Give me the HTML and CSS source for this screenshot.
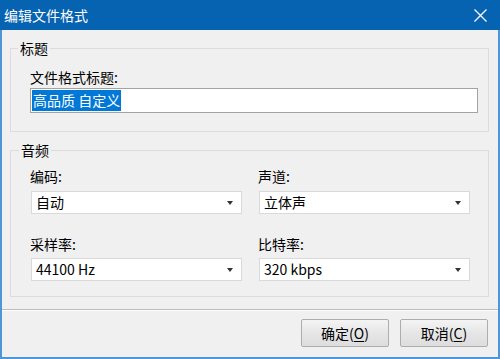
FILE: index.html
```html
<!DOCTYPE html>
<html lang="zh-CN">
<head>
<meta charset="utf-8">
<title>编辑文件格式</title>
<link rel="stylesheet" href="styles.css">
</head>
<body>
<div class="window">
  <div class="titlebar">
    <span class="title">编辑文件格式</span>
    <span class="close" aria-label="关闭">
      <svg width="13" height="13" viewBox="0 0 13 13"><path d="M0.5 0.5 L12.5 12.5 M12.5 0.5 L0.5 12.5" stroke="#fff" stroke-width="1.3" fill="none"/></svg>
    </span>
  </div>
  <div class="content">
    <fieldset class="group group-title">
      <legend>标题</legend>
      <div class="label">文件格式标题:</div>
      <div class="textbox"><span class="sel">高品质 自定义</span></div>
    </fieldset>
    <fieldset class="group group-audio">
      <legend>音频</legend>
      <div class="grid">
        <div class="field">
          <div class="label">编码:</div>
          <div class="combo"><span>自动</span><i class="arrow"></i></div>
        </div>
        <div class="field">
          <div class="label">声道:</div>
          <div class="combo"><span>立体声</span><i class="arrow"></i></div>
        </div>
        <div class="field">
          <div class="label">采样率:</div>
          <div class="combo"><span>44100 Hz</span><i class="arrow"></i></div>
        </div>
        <div class="field">
          <div class="label">比特率:</div>
          <div class="combo"><span>320 kbps</span><i class="arrow"></i></div>
        </div>
      </div>
    </fieldset>
  </div>
  <div class="separator"></div>
  <div class="footer">
    <button class="btn">确定(<u>O</u>)</button>
    <button class="btn">取消(<u>C</u>)</button>
  </div>
</div>
</body>
</html>
```
FILE: styles.css
```css
* { box-sizing: border-box; }
html, body { margin: 0; padding: 0; background: #f0f0f0; }
body {
  font-family: "Noto Sans CJK SC", "Noto Sans", sans-serif;
  font-size: 14px;
  color: #000;
}
.window {
  width: 500px;
  height: 359px;
  display: flex;
  flex-direction: column;
  background: #f0f0f0;
  border: 2px solid #4d97d8;
  border-top: 0;
}
.titlebar {
  height: 30px;
  margin: 0 -2px;
  background: #0563b1;
  color: #fff;
  display: flex;
  align-items: center;
  justify-content: space-between;
  padding: 0 13px 0 4px;
  line-height: 18px;
}
.close { display: flex; }
.content {
  padding: 0 9px 0 8px;
}
.group {
  margin: 9px 0 0 0;
  border: 1px solid #dcdcdc;
  min-width: 0;
}
.group legend {
  padding: 0 2px;
  margin-left: -12px;
  line-height: 18px;
}
.label { line-height: 18px; }
.group-title { padding: 11px 10px 18px 19px; }
.textbox {
  margin-top: 2px;
  width: 448px;
  height: 25px;
  background: #fff;
  border: 1px solid #a3a3a3;
  padding: 1px;
  line-height: 21px;
}
.sel {
  display: inline-block;
  background: #0078d7;
  color: #fff;
  padding: 0 1px;
  height: 21px;
}
.group-audio { padding: 8px 10px 15px 20px; }
.grid {
  display: grid;
  grid-template-columns: 211px 211px;
  column-gap: 17px;
  row-gap: 21px;
}
.field .label { margin-left: -1px; }
.combo {
  margin-top: 6px;
  height: 23px;
  background: #fff;
  border: 1px solid #d9d9d9;
  display: flex;
  align-items: center;
  justify-content: space-between;
  padding: 0 8px 0 4px;
  line-height: 21px;
}
.field:nth-child(n+3) .combo { margin-top: 5px; }
.arrow {
  width: 0;
  height: 0;
  border-left: 3.5px solid transparent;
  border-right: 3.5px solid transparent;
  border-top: 4px solid #333;
}
.separator {
  margin-top: 12px;
  height: 2px;
  border-top: 1px solid #bcbcbc;
  border-bottom: 1px solid #fdfdfd;
}
.footer {
  flex: 1;
  display: flex;
  justify-content: flex-end;
  align-items: flex-start;
  gap: 11px;
  padding: 8px 10px 0 0;
}
.btn {
  width: 88px;
  height: 28px;
  font: inherit;
  line-height: 18px;
  color: #000;
  border: 1px solid #adadad;
  border-radius: 2px;
  background: linear-gradient(#f4f4f4, #e6e6e6 50%, #dddddd);
  padding: 0;
}
.btn u { text-underline-offset: 2px; }
```
